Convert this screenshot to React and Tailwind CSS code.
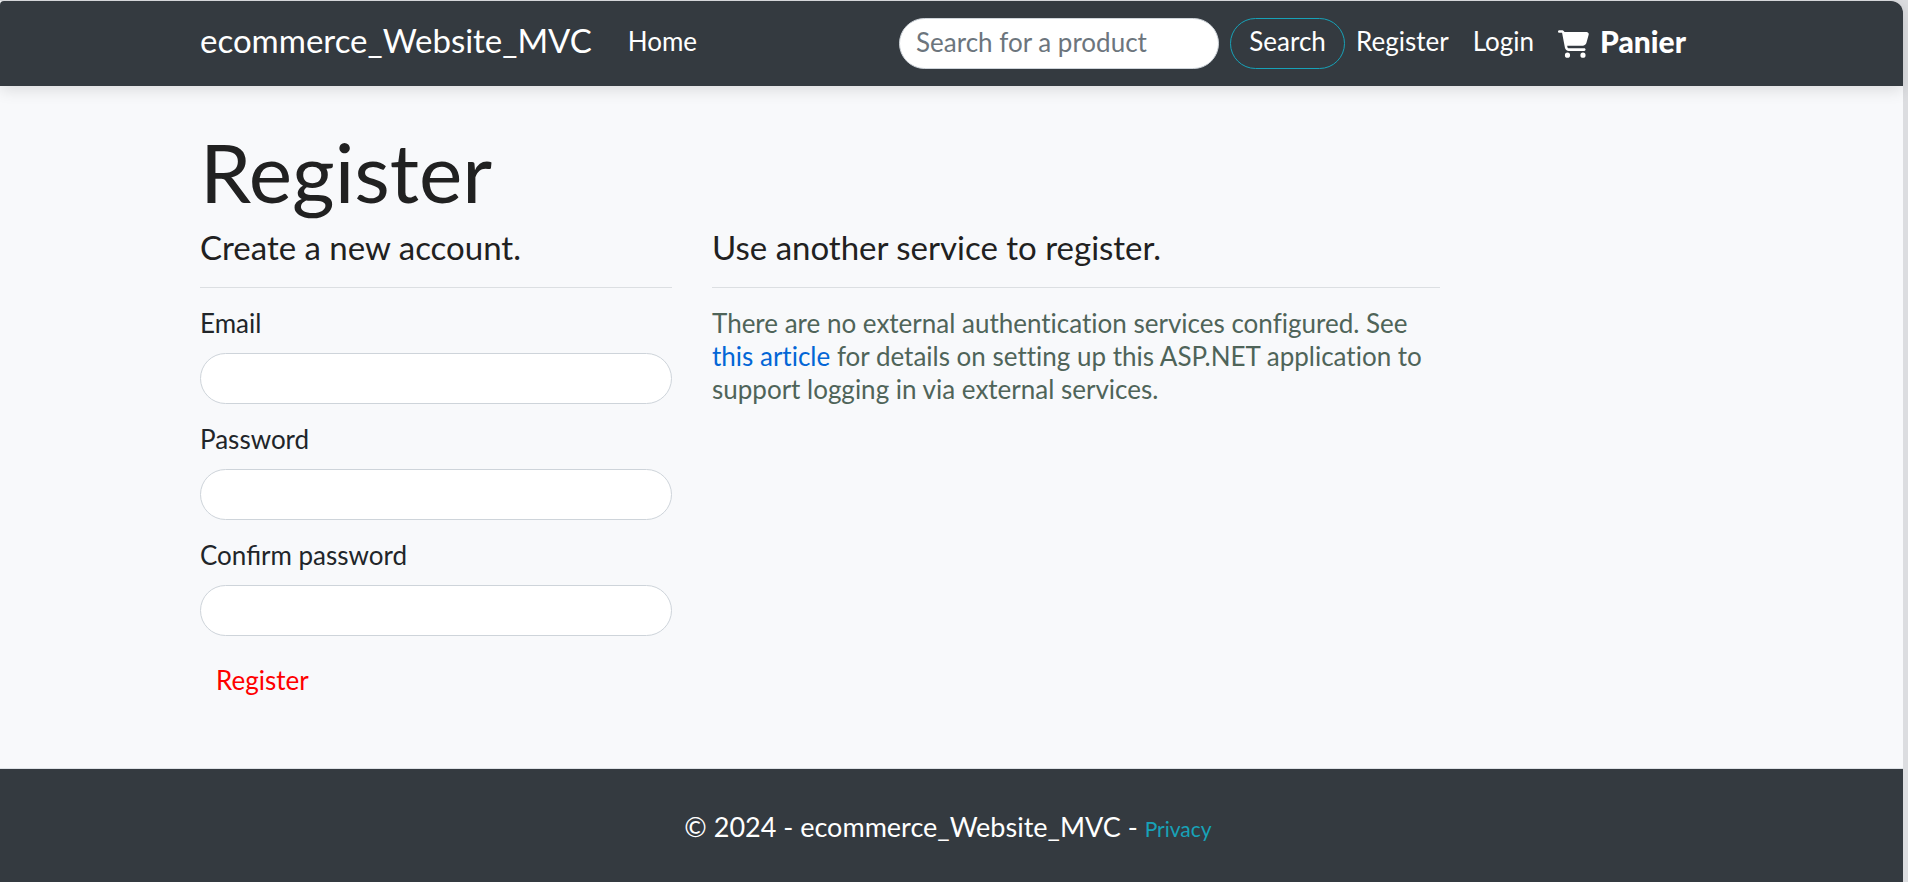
import React from "react";
import { FaCartShopping } from "react-icons/fa6";

const fields = [
  { id: "email", label: "Email", type: "email" },
  { id: "password", label: "Password", type: "password" },
  { id: "confirm-password", label: "Confirm password", type: "password" },
];

const inputClass =
  "h-[51px] rounded-full border border-[#ced4da] bg-white px-4 pb-1 text-[#212529] outline-none";

function Header() {
  return (
    <header className="relative rounded-tr-[12px] rounded-tl-[4px] bg-[#343a40] pr-[7px] text-white shadow-[0_4px_16px_rgba(0,0,0,0.12)]">
      <nav className="mx-auto flex h-[85px] max-w-[1536px] items-center px-5">
        <a href="#" className="pb-2 text-[33px] leading-[40px]">
          ecommerce_Website_MVC
        </a>
        <a href="#" className="ml-9 pb-1">
          Home
        </a>
        <form className="ml-auto flex items-center gap-[11px]" onSubmit={(e) => e.preventDefault()}>
          <input
            type="search"
            aria-label="Search for a product"
            placeholder="Search for a product"
            className={inputClass + " w-[320px] placeholder:text-[#6c757d]"}
          />
          <button
            type="submit"
            className="h-[51px] w-[115px] rounded-full border border-[#17a2b8] pb-1"
          >
            Search
          </button>
        </form>
        <a href="#" className="ml-[11px] pb-1">
          Register
        </a>
        <a href="#" className="ml-6 pb-1">
          Login
        </a>
        <a href="#" className="ml-6 mr-[10px] flex items-center gap-[11px] text-[30px] font-black">
          <FaCartShopping className="h-[28px] w-[31px]" />
          <span className="pb-1">Panier</span>
        </a>
      </nav>
    </header>
  );
}

function SectionTitle({ children }) {
  return (
    <h2 className="border-b border-[#dcdfe2] pb-[22px] text-[33px] leading-[36px] text-[#212121]">
      {children}
    </h2>
  );
}

export default function App() {
  return (
    <div className="min-h-screen bg-[#dcdde0] pt-px pr-[5px] font-['Lato','Liberation_Sans',sans-serif] text-[26px] leading-[33px]">
      <div className="flex min-h-[calc(100vh-1px)] flex-col rounded-tr-[12px] bg-[#f8f9fb]">
        <Header />
        <main className="flex-1 pr-[7px]">
          <div className="mx-auto max-w-[1536px] px-5 pt-[38px]">
            <h1 className="text-[82px] leading-[94px] text-[#212121]">Register</h1>
            <div className="-mx-5 mt-[11px] grid grid-cols-12">
              <section className="col-span-4 px-5">
                <SectionTitle>Create a new account.</SectionTitle>
                <form className="pt-[19px] text-[#212529]" onSubmit={(e) => e.preventDefault()}>
                  {fields.map((field) => (
                    <div key={field.id} className="mb-[19px] flex flex-col gap-[13px]">
                      <label htmlFor={field.id}>{field.label}</label>
                      <input id={field.id} type={field.type} className={inputClass} />
                    </div>
                  ))}
                  <button type="submit" className="h-[51px] px-4 text-[#ff0000]">
                    Register
                  </button>
                </form>
              </section>
              <section className="col-span-6 px-5">
                <SectionTitle>Use another service to register.</SectionTitle>
                <p className="pt-[19px] text-[#4f6459] [font-variant-ligatures:none]">
                  There are no external authentication services configured. See{" "}
                  <a href="#" className="text-[#0366d6]">
                    this article
                  </a>{" "}
                  for details on setting up this ASP.NET application to support logging in via
                  external services.
                </p>
              </section>
            </div>
          </div>
        </main>
        <footer className="flex h-[114px] items-center justify-center border-t border-[#dee2e6] bg-[#343a40] pt-1 pr-[7px] text-white">
          <p className="text-[27px]">
            © 2024 - ecommerce_Website_MVC -{" "}
            <a href="#" className="text-[21px] text-[#17a2b8]">
              Privacy
            </a>
          </p>
        </footer>
      </div>
    </div>
  );
}
